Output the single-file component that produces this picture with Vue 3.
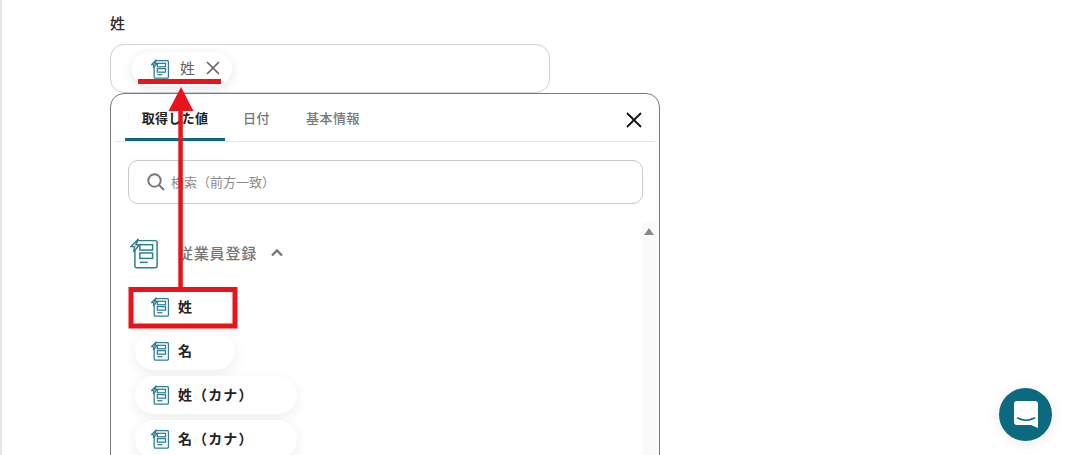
<script setup>
const tabs = [
  { label: '取得した値', active: true },
  { label: '日付', active: false },
  { label: '基本情報', active: false }
]
const chips = [
  { label: '姓', wide: false },
  { label: '名', wide: false },
  { label: '姓（カナ）', wide: true },
  { label: '名（カナ）', wide: true }
]
const docPath = 'M8 2.4 H25.6 a2 2 0 0 1 2 2 V28 a2 2 0 0 1 -2 2 H7 a2 2 0 0 1 -2 -2 V13'
const boltPath = 'M8.5 0.8 L1 8.5 H4.6 L3.8 14 L9.4 6.6 H6 Z'
</script>

<template>
  <div class="page">
    <div class="field">
      <div class="label">姓</div>
      <div class="input">
        <div class="tag">
          <svg class="doc" viewBox="0 0 28.5 31" fill="none">
            <path :d="docPath" />
            <path :d="boltPath" />
            <rect x="10" y="6.5" width="13" height="5.5" />
            <rect x="10" y="15" width="13" height="5.5" />
            <path d="M10 24.5 H18" />
          </svg>
          <span class="tag-text">姓</span>
          <svg class="tag-x" viewBox="0 0 14 14" fill="none">
            <path d="M1 1 L13 13 M13 1 L1 13" />
          </svg>
        </div>
      </div>
      <div class="panel">
        <div class="tabs">
          <div v-for="t in tabs" :key="t.label" class="tab" :class="{ active: t.active }">{{ t.label }}</div>
          <svg class="close" viewBox="0 0 16 16" fill="none">
            <path d="M1 1 L15 15 M15 1 L1 15" />
          </svg>
        </div>
        <div class="search">
          <svg class="search-icon" viewBox="0 0 18 18" fill="none">
            <circle cx="7.5" cy="7.5" r="6.2" />
            <path d="M12 12 L17 17" />
          </svg>
          <span>検索（前方一致）</span>
        </div>
        <div class="scroll-up"><i></i></div>
        <div class="group">
          <svg class="doc doc-lg" viewBox="0 0 28.5 31" fill="none">
            <path :d="docPath" />
            <path :d="boltPath" />
            <rect x="10" y="6.5" width="13" height="5.5" />
            <rect x="10" y="15" width="13" height="5.5" />
            <path d="M10 24.5 H18" />
          </svg>
          <span class="group-text">従業員登録</span>
          <svg class="chev" viewBox="0 0 12 8" fill="none">
            <path d="M1 6.5 L6 1.5 L11 6.5" />
          </svg>
        </div>
        <div class="chips">
          <div v-for="c in chips" :key="c.label" class="chip" :class="{ wide: c.wide }">
            <svg class="doc" viewBox="0 0 28.5 31" fill="none">
              <path :d="docPath" />
              <path :d="boltPath" />
              <rect x="10" y="6.5" width="13" height="5.5" />
              <rect x="10" y="15" width="13" height="5.5" />
              <path d="M10 24.5 H18" />
            </svg>
            <span>{{ c.label }}</span>
          </div>
        </div>
      </div>
    </div>

    <svg class="annot" width="1077" height="455" viewBox="0 0 1077 455">
      <rect x="138" y="79" width="83" height="5" fill="#e8141c" />
      <rect x="178.3" y="110" width="4.5" height="178" fill="#e8141c" />
      <path d="M181 87 L193.5 111 L168.5 111 Z" fill="#e8141c" />
      <rect x="131" y="289.5" width="104" height="36.5" fill="none" stroke="#e8141c" stroke-width="5" />
    </svg>

    <div class="chat">
      <svg viewBox="0 0 24 27" width="24" height="27">
        <path d="M3 0 H21 a3 3 0 0 1 3 3 V27 L17 24 H3 a3 3 0 0 1 -3 -3 V3 a3 3 0 0 1 3 -3 Z" fill="#fff" />
        <path d="M3.5 17 Q12 21.5 20.5 17" fill="none" stroke="#0b6a80" stroke-width="1.5" stroke-linecap="round" />
      </svg>
    </div>
  </div>
</template>

<style>
html, body { margin: 0; background: #fff; }
</style>

<style scoped>
.page {
  position: relative;
  width: 1077px;
  height: 455px;
  overflow: hidden;
  box-sizing: border-box;
  border-left: 2px solid #e6e6e6;
  background: #fff;
  font-family: "Noto Sans CJK JP", "Noto Sans", sans-serif;
}
.field {
  padding: 13px 0 0 108px;
  width: 550px;
}
.label {
  font-size: 15px;
  line-height: 20px;
  font-weight: 500;
  color: #2b2b2b;
  height: 31px;
}
.input {
  box-sizing: border-box;
  width: 440px;
  height: 49px;
  border: 1px solid #cfd2d8;
  border-radius: 14px;
  padding: 7px 0 0 21px;
}
.tag {
  display: flex;
  align-items: center;
  box-sizing: border-box;
  width: 100px;
  height: 34px;
  padding-left: 19px;
  border-radius: 17px;
  background: #fff;
  box-shadow: 0 3px 12px rgba(0, 0, 0, 0.1);
}
.doc {
  width: 18px;
  height: 20px;
  flex: none;
  stroke: #2a7f96;
  stroke-width: 2;
}
.tag-text {
  margin-left: 11px;
  margin-bottom: 4px;
  font-size: 15px;
  color: #666;
}
.tag-x {
  width: 14px;
  height: 14px;
  margin-left: 11px;
  margin-bottom: 2px;
  stroke: #666;
  stroke-width: 1.7;
}
.panel {
  box-sizing: border-box;
  width: 550px;
  height: 400px;
  border: 1px solid #77787c;
  border-radius: 14px;
  background: #fff;
  position: relative;
}
.tabs {
  display: flex;
  margin: 0 4px;
  height: 47px;
  padding-left: 10px;
  border-bottom: 1px solid #e4e6e8;
  position: relative;
}
.tab {
  display: flex;
  align-items: center;
  justify-content: center;
  box-sizing: border-box;
  height: 47px;
  font-size: 13px;
  font-weight: 500;
  letter-spacing: 0.5px;
  color: #777;
  padding: 0 18px;
}
.tab.active {
  width: 100px;
  padding: 3px 0 0;
  color: #222;
  font-weight: 700;
  letter-spacing: 0.3px;
  border-bottom: 3px solid #0b6a80;
  border-radius: 3px 3px 0 0;
}
.close {
  position: absolute;
  right: 13px;
  top: 18px;
  width: 16px;
  height: 16px;
  stroke: #111;
  stroke-width: 1.8;
}
.search {
  box-sizing: border-box;
  display: flex;
  align-items: center;
  width: 515px;
  height: 44px;
  margin: 18px 0 0 17px;
  padding-left: 18px;
  border: 1px solid #c9c9c9;
  border-radius: 10px;
  font-size: 13px;
  color: #8a8a8a;
}
.search span {
  margin-bottom: 2px;
}
.search-icon {
  width: 18px;
  height: 18px;
  margin-right: 6px;
  stroke: #777;
  stroke-width: 2;
}
.scroll-up {
  position: absolute;
  right: 3px;
  top: 128px;
  width: 14px;
  height: 320px;
  background: #fafafa;
}
.scroll-up i {
  display: block;
  width: 0;
  height: 0;
  margin: 6px 0 0 2px;
  border-left: 5px solid transparent;
  border-right: 5px solid transparent;
  border-bottom: 7px solid #8a8a8a;
}
.group {
  display: flex;
  align-items: center;
  height: 34px;
  margin: 32px 0 0 19px;
}
.doc-lg {
  width: 28px;
  height: 31px;
  stroke-width: 1.5;
}
.group-text {
  margin-left: 20px;
  margin-bottom: 2px;
  font-size: 15px;
  font-weight: 500;
  letter-spacing: 0.8px;
  color: #777;
}
.chev {
  width: 12px;
  height: 8px;
  margin-left: 14px;
  stroke: #777;
  stroke-width: 2.4;
}
.chips {
  display: flex;
  flex-direction: column;
  gap: 6px;
  margin: 18px 0 0 24px;
}
.chip {
  box-sizing: border-box;
  display: flex;
  align-items: center;
  width: 100px;
  height: 38px;
  padding-left: 16px;
  border-radius: 19px;
  background: #fff;
  box-shadow: 0 4px 14px rgba(0, 0, 0, 0.07);
  font-size: 14px;
  font-weight: 700;
  letter-spacing: 1.1px;
  color: #222;
}
.chip.wide { width: 162px; }
.chip span {
  margin-left: 9px;
  margin-bottom: 2px;
}
.annot {
  position: absolute;
  left: -2px;
  top: 0;
  pointer-events: none;
}
.chat {
  position: absolute;
  left: 997px;
  top: 388px;
  width: 53px;
  height: 53px;
  border-radius: 50%;
  background: #0b6a80;
  display: flex;
  align-items: center;
  justify-content: center;
  box-shadow: 0 2px 14px rgba(0, 0, 0, 0.08);
}
</style>
